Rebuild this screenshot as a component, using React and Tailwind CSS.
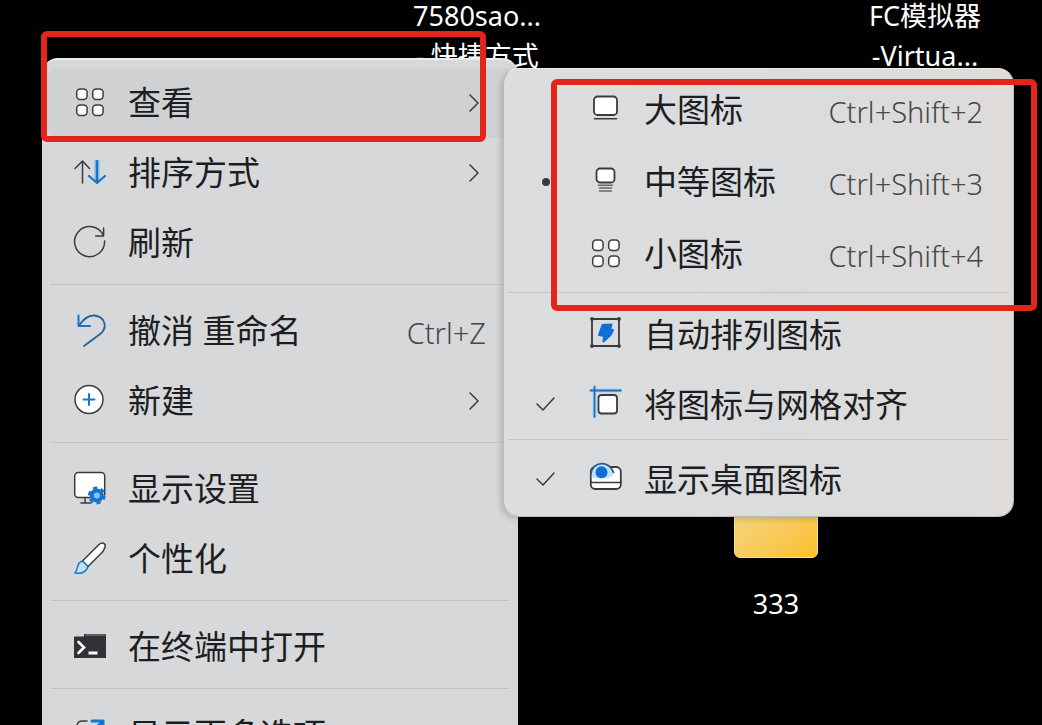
import { useState } from 'react';

const stroke = { fill: 'none', stroke: '#3a3b3f', strokeWidth: 1.5, strokeLinecap: 'round', strokeLinejoin: 'round' };

function Icon({ children }) {
  return (
    <svg viewBox="0 0 32 32" className="size-8 shrink-0 overflow-visible" aria-hidden="true" {...stroke}>
      {children}
    </svg>
  );
}

function GridIcon() {
  return (
    <Icon>
      <rect x="2.7" y="2" width="10.4" height="10.4" rx="3.4" fill="#fff" />
      <rect x="18.7" y="2" width="10.4" height="10.4" rx="3.4" fill="#fff" />
      <rect x="2.7" y="18" width="10.4" height="10.4" rx="3.4" fill="#fff" />
      <rect x="18.7" y="18" width="10.4" height="10.4" rx="3.4" fill="#fff" />
    </Icon>
  );
}

function SortIcon() {
  return (
    <Icon>
      <path d="M8.5 26V4M1 11.5 8.5 4l7 7.5" />
      <path d="M23 3v22" stroke="#7db8ea" strokeWidth="5" strokeLinecap="butt" />
      <path d="M23 4v22M15 19l8 7 8-7" stroke="#1a73c4" strokeWidth="2.2" />
    </Icon>
  );
}

function RefreshIcon() {
  return (
    <Icon>
      <path d="M29.3 8.5A15 15 0 1 0 30.6 14" />
      <path d="M29.6 1v8h-8" />
    </Icon>
  );
}

function UndoIcon() {
  return (
    <Icon>
      <path d="M4.5 0.500v10.500H16" stroke="#1577cc" strokeWidth="2" />
      <path d="M5 10.500C10 3 15 .2 20.500 .5C30 1.500 34 11 27.500 18L10 31" stroke="#1f64a3" strokeWidth="1.800" />
    </Icon>
  );
}

function NewIcon() {
  return (
    <Icon>
      <circle cx="15" cy="14.500" r="14" fill="#fff" />
      <path d="M15 9v11M9.500 14.500h11" stroke="#1577cc" strokeWidth="2" />
    </Icon>
  );
}

function DisplayIcon() {
  return (
    <Icon>
      <path d="M11 24v6M7 30h10" />
      <rect x="0.700" y="-0.500" width="30" height="25" rx="3.500" fill="#fff" />
      <path d="M24.500 22.500h8v9h-8z" fill="#d7d8da" stroke="none" />
      <circle cx="22.800" cy="22.500" r="5" stroke="#1673cf" strokeWidth="4" fill="#8cc4f5" />
      <circle cx="22.800" cy="22.500" r="7.600" stroke="#1673cf" strokeWidth="2.600" strokeDasharray="4.200 3.760" strokeLinecap="butt" />
    </Icon>
  );
}

function BrushIcon() {
  return (
    <Icon>
      <path d="M8.500 18 25 1.500c3-2.500 7-1.500 6 2.500-.6 2-1.500 3.500-2.500 5L14 23.500z" fill="#fff" />
      <path d="M8.500 18c-3.500 1-4.500 3.500-5 6-.4 2.500-1.500 4.500-2.500 6 5.500 1 11-.5 13-6.500z" fill="#bfe0fa" stroke="#1f74bd" />
    </Icon>
  );
}

function TerminalIcon() {
  return (
    <Icon>
      <path d="M0 5.500h10V3h22v24H0z" fill="#303236" stroke="none" />
      <path d="M12 4h19" stroke="#8a8c90" strokeWidth="1.200" />
      <path d="m4.500 11 5.500 5.500-5.500 5.500" stroke="#fff" strokeWidth="2.600" strokeLinejoin="miter" />
      <path d="M14.500 22h9" stroke="#fff" strokeWidth="3" strokeLinecap="butt" />
    </Icon>
  );
}

function MoreOptionsIcon() {
  return (
    <Icon>
      <path d="M13 2H8Q3 2 3 8v18q0 4 4 4h17q4 0 4-4v-6" />
      <path d="M18 2h11v11M28 3 14 17" stroke="#1577cc" strokeWidth="3" />
    </Icon>
  );
}

function LargeIcon() {
  return (
    <Icon>
      <rect x="4" y="2.500" width="23" height="18.500" rx="3.500" fill="#fff" strokeWidth="1.800" />
      <path d="M4.500 24.700h22" />
    </Icon>
  );
}

function MediumIcon() {
  return (
    <Icon>
      <rect x="6.500" y="2.500" width="18" height="14" rx="3.500" fill="#fff" strokeWidth="1.800" />
      <path d="M8.500 19.200h14M9.500 22h12M9.500 25h12" stroke="#65676b" />
    </Icon>
  );
}

function AutoArrangeIcon() {
  return (
    <Icon>
      <rect x="2" y="0" width="27" height="27" strokeWidth="1.800" />
      <path d="M2 0h.01M29 0h.01M2 27h.01M29 27h.01" strokeWidth="3.800" />
      <path d="m12.500 6 9-.5-1.500 5 3 .5-2.500 5-7 6.500.5-5.500-5-1z" fill="#0f6fd6" stroke="#0f6fd6" strokeWidth="2" />
    </Icon>
  );
}

function AlignGridIcon() {
  return (
    <Icon>
      <path d="M1 1.500h30M4.500-2v30" stroke="#a9d3f5" strokeWidth="4" strokeLinecap="butt" />
      <path d="M.5 1.500h30.500M4.500-2.500v30.500" stroke="#1f6fb5" strokeWidth="1.800" />
      <rect x="8.500" y="6" width="18.500" height="18.500" rx="3" fill="#fff" strokeWidth="1.800" />
    </Icon>
  );
}

function DesktopIconsIcon() {
  return (
    <Icon>
      <rect x="0.800" y="3" width="30" height="22" rx="4.500" fill="#fff" strokeWidth="1.800" />
      <path d="M1 18.500h30" />
      <path d="M1.800 14V8a10 8 0 0 1 21 1v3l-5 2.500z" fill="#c2e3fb" stroke="none" />
      <path d="M0.800 10C2-3 20-4 23.500 8.500" stroke="#285a85" strokeWidth="1.800" />
      <circle cx="11.500" cy="8.300" r="6" fill="#0f6fd6" stroke="none" />
    </Icon>
  );
}

function Chevron() {
  return (
    <svg viewBox="0 0 24 24" className="size-6 shrink-0" aria-hidden="true" {...stroke}>
      <path d="m8 4 8 8-8 8" />
    </svg>
  );
}

function Mark({ type }) {
  return (
    <span className="flex size-6 mr-8 shrink-0 items-center justify-center">
      {type === 'dot' && <span className="size-2 rounded-full bg-[#3a3b3f]" />}
      {type === 'check' && (
        <svg viewBox="0 0 24 24" className="size-6" aria-hidden="true" {...stroke}>
          <path d="m3 11 6 6L20 5" />
        </svg>
      )}
    </span>
  );
}

const mainMenu = [
  [
    { label: '查看', icon: GridIcon, submenu: true },
    { label: '排序方式', icon: SortIcon, submenu: true },
    { label: '刷新', icon: RefreshIcon },
  ],
  [
    { label: '撤消 重命名', icon: UndoIcon, shortcut: 'Ctrl+Z' },
    { label: '新建', icon: NewIcon, submenu: true },
  ],
  [
    { label: '显示设置', icon: DisplayIcon },
    { label: '个性化', icon: BrushIcon },
  ],
  [{ label: '在终端中打开', icon: TerminalIcon }],
  [{ label: '显示更多选项', icon: MoreOptionsIcon }],
];

const sizes = [
  { label: '大图标', icon: LargeIcon, shortcut: 'Ctrl+Shift+2' },
  { label: '中等图标', icon: MediumIcon, shortcut: 'Ctrl+Shift+3' },
  { label: '小图标', icon: GridIcon, shortcut: 'Ctrl+Shift+4' },
];

function MenuItem({ item, active, children, onClick, className }) {
  const ItemIcon = item.icon;
  return (
    <button
      type="button"
      role="menuitem"
      onClick={onClick}
      className={`flex items-center rounded-lg px-[26px] text-left hover:bg-black/5 ${active ? 'bg-black/[0.03]' : ''} ${className}`}
    >
      {children}
      <ItemIcon />
      <span className="ml-[22px] flex-1 whitespace-nowrap text-[33px] leading-10 text-[#1d1e22]">{item.label}</span>
      {item.shortcut && (
        <span className="whitespace-nowrap pt-1 text-[29px] leading-10 font-light text-[#45464b]">{item.shortcut}</span>
      )}
      {item.submenu && <Chevron />}
    </button>
  );
}

function MainMenu() {
  return (
    <div
      role="menu"
      className="absolute left-[42px] top-[58px] flex w-[476px] flex-col rounded-2xl border-t-2 border-[#ececec] bg-[#d7d8da] pt-2"
    >
      {mainMenu.map((group, i) => (
        <div key={i} className="flex flex-col">
          {i > 0 && <hr className="mx-2 mt-1.5 mb-[11px] border-[#c2c3c5]" />}
          {group.map((item) => (
            <MenuItem key={item.label} item={item} active={item.label === '查看'} className="mx-1.5 h-[70px]" />
          ))}
        </div>
      ))}
    </div>
  );
}

function ViewMenu() {
  const [size, setSize] = useState('中等图标');
  const [alignGrid, setAlignGrid] = useState(true);
  const [showIcons, setShowIcons] = useState(true);
  const [autoArrange, setAutoArrange] = useState(false);

  return (
    <div
      role="menu"
      className="absolute left-[503px] top-[68px] flex w-[511px] flex-col rounded-2xl border border-[#b9babd] border-t-[#eeeeee] bg-linear-to-r from-[#dbdddf] via-[#dadcdd] to-[#dfdcda] px-1 pt-[9px] pb-1 shadow-[-2px_2px_6px_rgba(0,0,0,0.18)]"
    >
      <div className="flex flex-col gap-2">
        {sizes.map((item) => (
          <MenuItem key={item.label} item={item} onClick={() => setSize(item.label)} className="h-16">
            <Mark type={size === item.label ? 'dot' : null} />
          </MenuItem>
        ))}
      </div>
      <hr className="mt-1.5 mb-2.5 border-[#c4c5c7]" />
      <div className="flex flex-col gap-1.5">
        <MenuItem item={{ label: '自动排列图标', icon: AutoArrangeIcon }} onClick={() => setAutoArrange(!autoArrange)} className="h-16">
          <Mark type={autoArrange ? 'check' : null} />
        </MenuItem>
        <MenuItem item={{ label: '将图标与网格对齐', icon: AlignGridIcon }} onClick={() => setAlignGrid(!alignGrid)} className="h-16">
          <Mark type={alignGrid ? 'check' : null} />
        </MenuItem>
      </div>
      <hr className="mt-0.5 mb-2 border-[#c4c5c7]" />
      <MenuItem item={{ label: '显示桌面图标', icon: DesktopIconsIcon }} onClick={() => setShowIcons(!showIcons)} className="h-16">
        <Mark type={showIcons ? 'check' : null} />
      </MenuItem>
    </div>
  );
}

function DesktopLabel({ lines, className }) {
  return (
    <div className={`absolute flex w-40 flex-col gap-2 text-center text-[27px] leading-8 text-white ${className}`}>
      {lines.map((line) => (
        <div key={line} className="whitespace-nowrap">{line}</div>
      ))}
    </div>
  );
}

export default function App() {
  return (
    <main className="relative h-screen overflow-hidden bg-black font-['Noto_Sans','Noto_Sans_CJK_SC',sans-serif]">
      <DesktopLabel lines={['7580sao...', '- 快捷方式']} className="left-[397px] top-0" />
      <DesktopLabel lines={['FC模拟器', '-Virtua...']} className="left-[845px] top-0" />
      <div className="absolute left-[734px] top-[490px] h-[68px] w-[84px] rounded-md border border-[#ffe08a] bg-linear-to-br from-[#f3d98a] to-[#fbbf24]" />
      <DesktopLabel lines={['333']} className="left-[696px] top-[588px]" />

      <MainMenu />
      <ViewMenu />

      <div className="pointer-events-none absolute left-[41px] top-[31px] h-[111px] w-[445px] rounded-md border-[6px] border-[#e5251b]" />
      <div className="pointer-events-none absolute left-[551px] top-[79px] h-[232px] w-[486px] rounded-md border-[6px] border-[#e5251b]" />
    </main>
  );
}
